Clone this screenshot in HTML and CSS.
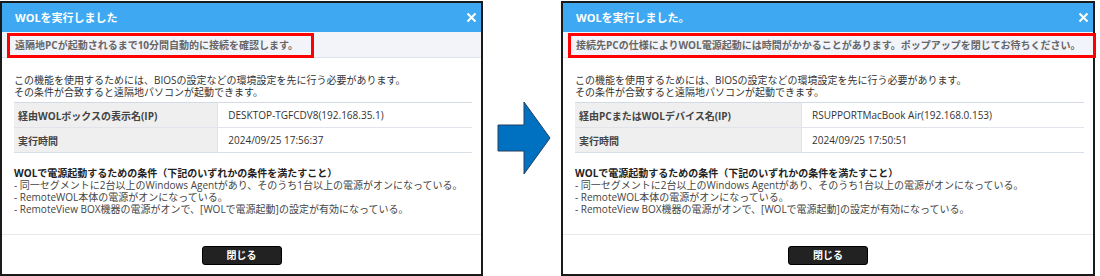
FILE: index.html
```html
<!DOCTYPE html>
<html lang="ja">
<head>
<meta charset="utf-8">
<title>WOL</title>
<link rel="stylesheet" href="styles.css">
</head>
<body>
<div class="stage">
  <section class="dialog dialog-a">
    <header class="dlg-head">
      <h1 class="dlg-title">WOLを実行しました</h1>
      <svg class="close" width="11" height="11" viewBox="0 0 11 11"><path d="M1.5 1.5L9.5 9.5M9.5 1.5L1.5 9.5" stroke="#fff" stroke-width="2" fill="none"/></svg>
    </header>
    <div class="notice"><span class="notice-text">遠隔地PCが起動されるまで10分間自動的に接続を確認します。</span></div>
    <div class="dlg-body">
      <p class="intro">この機能を使用するためには、BIOSの設定などの環境設定を先に行う必要があります。<br>その条件が合致すると遠隔地パソコンが起動できます。</p>
      <table class="info">
        <tr><th>経由WOLボックスの表示名(IP)</th><td>DESKTOP-TGFCDV8(192.168.35.1)</td></tr>
        <tr><th>実行時間</th><td>2024/09/25 17:56:37</td></tr>
      </table>
      <p class="cond"><strong class="cond-title">WOLで電源起動するための条件（下記のいずれかの条件を満たすこと）</strong><br>- 同一セグメントに2台以上のWindows Agentがあり、そのうち1台以上の電源がオンになっている。<br>- RemoteWOL本体の電源がオンになっている。<br>- RemoteView BOX機器の電源がオンで、[WOLで電源起動]の設定が有効になっている。</p>
    </div>
    <footer class="dlg-foot"><button class="btn-close">閉じる</button></footer>
  </section>

  <div class="arrow-col">
    <svg class="arrow" width="55" height="75" viewBox="0 0 55 75"><polygon points="1,24 27,24 27,1 53,37 27,73 27,50 1,50" fill="#0070c0" stroke="#233f63" stroke-width="1"/></svg>
  </div>

  <section class="dialog dialog-b">
    <header class="dlg-head">
      <h1 class="dlg-title">WOLを実行しました。</h1>
      <svg class="close" width="11" height="11" viewBox="0 0 11 11"><path d="M1.5 1.5L9.5 9.5M9.5 1.5L1.5 9.5" stroke="#fff" stroke-width="2" fill="none"/></svg>
    </header>
    <div class="notice"><span class="notice-text">接続先PCの仕様によりWOL電源起動には時間がかかることがあります。ポップアップを閉じてお待ちください。</span></div>
    <div class="dlg-body">
      <p class="intro">この機能を使用するためには、BIOSの設定などの環境設定を先に行う必要があります。<br>その条件が合致すると遠隔地パソコンが起動できます。</p>
      <table class="info">
        <tr><th>経由PCまたはWOLデバイス名(IP)</th><td>RSUPPORTMacBook Air(192.168.0.153)</td></tr>
        <tr><th>実行時間</th><td>2024/09/25 17:50:51</td></tr>
      </table>
      <p class="cond"><strong class="cond-title">WOLで電源起動するための条件（下記のいずれかの条件を満たすこと）</strong><br>- 同一セグメントに2台以上のWindows Agentがあり、そのうち1台以上の電源がオンになっている。<br>- RemoteWOL本体の電源がオンになっている。<br>- RemoteView BOX機器の電源がオンで、[WOLで電源起動]の設定が有効になっている。</p>
    </div>
    <footer class="dlg-foot"><button class="btn-close">閉じる</button></footer>
  </section>
</div>
</body>
</html>
```

FILE: styles.css
```css
html, body {
  margin: 0;
  background: #fff;
}
body {
  font-family: "Open Sans", "Noto Sans CJK JP", sans-serif;
  color: #333;
}
.stage {
  display: flex;
  align-items: flex-start;
  padding-top: 1px;
}
.dialog {
  box-sizing: border-box;
  height: 275px;
  border: 2px solid #1a1a1a;
  display: flex;
  flex-direction: column;
  background: #fff;
}
.dialog-a { width: 483px; }
.dialog-b { width: 534px; }
.arrow-col {
  box-sizing: border-box;
  width: 78px;
  padding: 100px 0 0 14px;
}
.arrow { display: block; }
.dlg-head {
  height: 29px;
  flex: none;
  background: #3ea9f2;
  display: flex;
  align-items: center;
  justify-content: space-between;
  padding: 0 4px 0 13px;
}
.dlg-title {
  margin: 0;
  font-size: 11px;
  font-weight: 700;
  color: #fff;
  line-height: 14px;
}
.close { display: block; }
.notice {
  flex: none;
  box-sizing: border-box;
  height: 26px;
  background: #f2f4fa;
  border-bottom: 1px solid #dfe3ec;
  padding-left: 5px;
}
.notice-text {
  display: inline-block;
  box-sizing: border-box;
  height: 25px;
  border: 3px solid #f00;
  padding: 0 13px 0 5px;
  font-size: 10px;
  font-weight: 700;
  color: #666;
  line-height: 19px;
  white-space: nowrap;
}
.dlg-body {
  flex: 1;
  padding: 16px 9px 0 12px;
}
.intro {
  margin: 0;
  font-size: 10px;
  line-height: 12px;
  white-space: nowrap;
}
.info {
  margin-top: 4px;
  width: 100%;
  border-collapse: collapse;
  font-size: 10px;
}
.info tr { border-top: 1px solid #e1e5eb; }
.info tr:first-child { border-top-color: #d3dae3; }
.info tr:last-child { border-bottom: 1px solid #d8dfe8; }
.info th {
  width: 44.5%;
  height: 24px;
  padding: 0 4px;
  background: #efefef;
  border-right: 1px solid #e3e3e3;
  text-align: left;
  font-weight: 700;
  color: #444;
  white-space: nowrap;
}
.info td {
  padding: 0 10px;
  color: #333;
  white-space: nowrap;
}
.cond {
  margin: 14px 0 0;
  font-size: 10px;
  line-height: 12px;
  color: #444;
  white-space: nowrap;
}
.cond-title {
  font-weight: 700;
  color: #222;
}
.dlg-foot {
  flex: none;
  box-sizing: border-box;
  height: 40px;
  border-top: 1px solid #e8e8e8;
  display: flex;
  justify-content: center;
  padding-top: 11px;
}
.btn-close {
  box-sizing: border-box;
  width: 80px;
  height: 19px;
  padding: 0;
  background: #222;
  border: 1px solid #000;
  border-radius: 3px;
  color: #fff;
  font-family: inherit;
  font-size: 10px;
  font-weight: 700;
  line-height: 17px;
}
```
